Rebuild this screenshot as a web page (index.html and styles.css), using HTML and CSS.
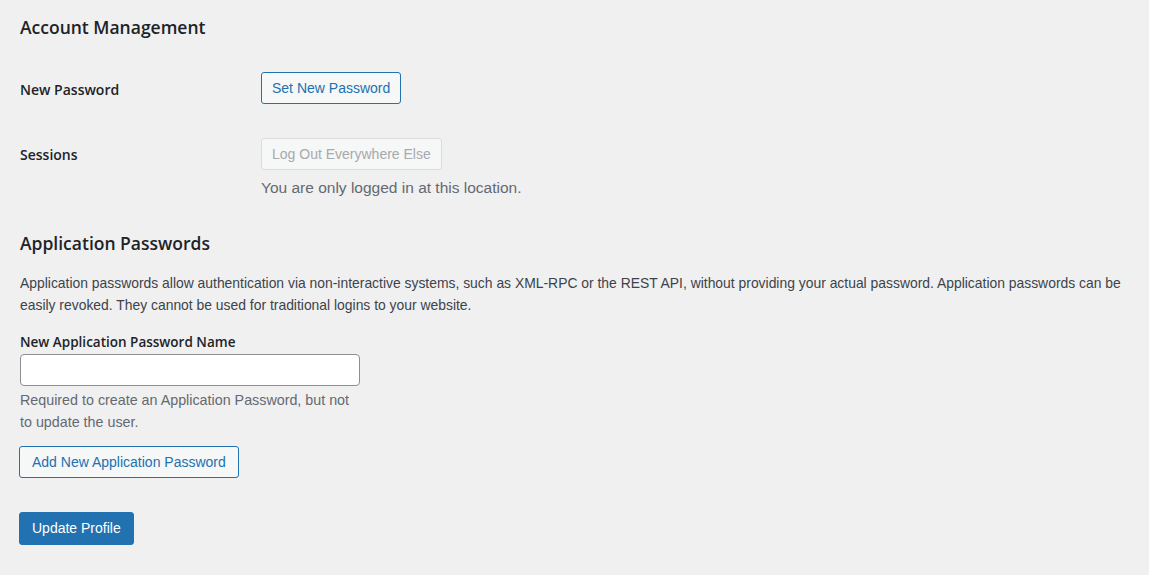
FILE: index.html
```html
<!DOCTYPE html>
<html>
<head>
<meta charset="utf-8">
<link rel="stylesheet" href="styles.css">
</head>
<body>
<div class="wrap">
  <h2 class="heading first">Account Management</h2>
  <div class="row row-one">
    <div class="th">New Password</div>
    <div class="td"><button class="button">Set New Password</button></div>
  </div>
  <div class="row row-two">
    <div class="th">Sessions</div>
    <div class="td">
      <button class="button disabled" disabled>Log Out Everywhere Else</button>
      <p class="description session-desc">You are only logged in at this location.</p>
    </div>
  </div>
  <h2 class="heading second">Application Passwords</h2>
  <p class="intro">Application passwords allow authentication via non-interactive systems, such as XML-RPC or the REST API, without providing your actual password. Application passwords can be easily revoked. They cannot be used for traditional logins to your website.</p>
  <div class="create">
    <label class="field-label" for="app-name">New Application Password Name</label>
    <input class="text-input" id="app-name" type="text">
    <p class="description app-desc">Required to create an Application Password, but not to update the user.</p>
    <button class="button add-btn">Add New Application Password</button>
  </div>
  <div class="submit">
    <button class="button primary">Update Profile</button>
  </div>
</div>
</body>
</html>
```

FILE: styles.css
```css
html, body {
  margin: 0;
  padding: 0;
  background: #f0f0f1;
}
body {
  font-family: "Liberation Sans", Arial, sans-serif;
  color: #3c434a;
  font-size: 14px;
}
.wrap {
  padding: 16px 20px 0 20px;
}
.heading {
  margin: 0;
  font-family: "Open Sans", "Liberation Sans", sans-serif;
  font-size: 17.5px;
  line-height: 23px;
  font-weight: 600;
  color: #1d2327;
}
.heading.second {
  margin-top: 33px;
}
.row {
  display: flex;
  align-items: flex-start;
}
.th {
  width: 241px;
  flex: none;
  padding-top: 42px;
  font-family: "Open Sans", "Liberation Sans", sans-serif;
  font-size: 14px;
  line-height: 18px;
  font-weight: 600;
  color: #1d2327;
}
.td {
  padding-top: 33px;
}
.row-two .td {
  padding-top: 34px;
}
.button {
  display: inline-block;
  box-sizing: border-box;
  height: 32px;
  margin: 0;
  padding: 0 10px;
  font-family: inherit;
  font-size: 14px;
  line-height: 30px;
  color: #2271b1;
  background: #f6f7f7;
  border: 1px solid #2271b1;
  border-radius: 3px;
  cursor: pointer;
  vertical-align: top;
}
.button.disabled {
  color: #a7aaad;
  border-color: #dcdcde;
  background: #f6f7f7;
  cursor: default;
}
.description {
  margin: 0;
  color: #646970;
  line-height: 22px;
}
.session-desc {
  margin-top: 7px;
  font-size: 15.5px;
}
.intro {
  margin: 17px 0 0 0;
  font-size: 13.9px;
  line-height: 22px;
  color: #3c434a;
}
.create {
  display: flex;
  flex-direction: column;
  align-items: flex-start;
  margin-top: 17px;
}
.field-label {
  font-family: "Open Sans", "Liberation Sans", sans-serif;
  font-size: 13.5px;
  line-height: 18px;
  font-weight: 600;
  color: #1d2327;
}
.text-input {
  box-sizing: border-box;
  width: 340px;
  height: 32px;
  margin-top: 3px;
  padding: 0 8px;
  border: 1px solid #8c8f94;
  border-radius: 4px;
  background: #fff;
  font-family: inherit;
  font-size: 14px;
}
.app-desc {
  width: 340px;
  margin-top: 3px;
  font-size: 14.3px;
}
.add-btn {
  margin-top: 13px;
  margin-left: -1px;
  padding: 0 12px;
}
.submit {
  margin-top: 34px;
  margin-left: -1px;
}
.button.primary {
  height: 33px;
  padding: 0 12px;
  background: #2271b1;
  border-color: #2271b1;
  color: #fff;
  line-height: 31px;
}
```
